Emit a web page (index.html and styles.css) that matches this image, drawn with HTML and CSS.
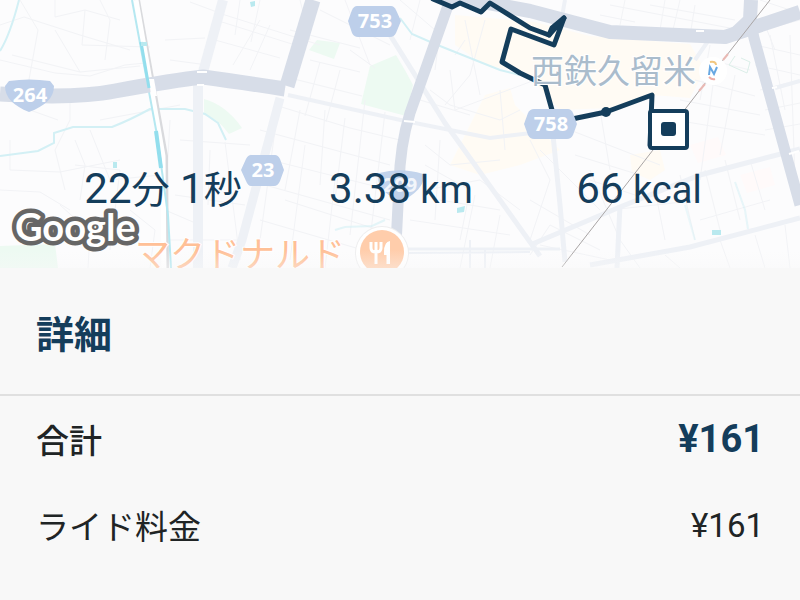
FILE: index.html
```html
<!DOCTYPE html>
<html lang="ja">
<head>
<meta charset="utf-8">
<meta name="viewport" content="width=device-width, initial-scale=1">
<title>ライド詳細</title>
<link rel="stylesheet" href="styles.css">
</head>
<body>
<main class="ride">
  <section class="summary">
    <svg class="map" viewBox="0 0 800 268" preserveAspectRatio="xMidYMid slice" role="img" aria-label="ライドの経路">
      <defs>
        <linearGradient id="fade" x1="0" y1="0" x2="0" y2="1">
          <stop offset="0" stop-color="#f9f9f9" stop-opacity="0"/>
          <stop offset="1" stop-color="#f8f8f8" stop-opacity=".4"/>
        </linearGradient>
      </defs>
      <rect width="800" height="268" fill="#fcfcfd"/>

      <!-- built-up areas -->
      <g fill="#fffbf4">
        <path d="M455 15L535 22 590 36 690 44 705 70 690 98 652 95 610 108 560 110 525 72 485 65 455 45Z"/>
        <path d="M485 95L510 88 515 105 560 150 520 165 480 175 450 165 470 125Z"/>
        <path d="M630 155L660 150 665 170 650 180 632 172Z"/>
      </g>
      <path d="M690 145l28-8 8 18-28 8zM740 175l30-8 5 18-28 8z" fill="#fffafa"/>

      <!-- parks -->
      <g fill="#edfaf2">
        <path d="M396 55L406 72 413 85 406 116 361 104 370 66Z"/>
        <path d="M317 40L340 43 334 59 309 50Z"/>
        <path d="M204 99Q226 105 242 128L229 134Q217 117 204 115Z"/>
        <path d="M0 246L55 244 58 268 0 268Z"/>
      </g>

      <!-- local streets -->
      <g class="lane">
        <path d="M0 25L24 17 80 35 130 50M12 55L80 72 140 66M28 85L38 30 20 0M55 0V17L85 10 120 20M0 60L55 73 90 76 125 65 145 63M55 30L80 72M85 10L82 45 150 47M100 0L110 20 105 60M165 40L205 38M190 2L225 15 320 45M170 60L200 64M233 65L260 20M250 70L270 25M222 22L295 45M215 40L280 58M240 0L235 35M260 0L251 42"/>
        <path d="M70 103V120L55 150 65 190M30 110L58 120M10 140V170L60 172 120 160M75 140L85 165 80 200M90 130L110 180 160 175M0 190L40 192 70 210M100 120L180 105M75 165L120 170 110 250M170 120L165 210 200 225M180 140L250 145M175 195L245 205M210 150L208 205M225 142L240 260M165 240L240 240M60 205L90 232 88 268M130 210L155 230 150 268"/>
        <path d="M300 0L310 40M320 10L390 45M290 30L360 48M350 50L375 68M345 0L370 65M310 60L360 72M290 78L362 96M275 105L350 128 400 140M320 62L305 116M340 70L326 122M325 110L320 185M345 118L335 200M300 110L285 190M260 130L390 165M250 155L390 190M265 185L390 220M285 200L385 232M260 220L380 255M275 130L260 240M305 145L290 260M335 180L325 268M365 100L350 235M385 112L370 240"/>
        <path d="M400 0L435 30M420 0L410 40M440 30L435 70M455 55L465 40M485 20L470 75 445 105M465 20L480 95M450 70L455 110 535 80M430 90L450 105 500 120 520 110M420 100L470 115M500 90L505 150M425 145L450 165 500 160M425 165L470 190 460 240M440 140L435 220M410 220L510 235M440 200L500 210M475 195L460 268M500 215L490 268M425 190L480 180 520 210"/>
        <path d="M610 5L740 30M600 15L635 22M665 0L660 30M680 0L672 34M695 5L690 36M625 0L620 25M650 5L735 20M760 0L790 10M750 20L745 35 800 20M765 25L775 50M710 45L700 100M710 60L750 70M695 80L755 96M680 100L760 115M675 120L765 135M735 75L720 155M715 70L700 180M755 45L800 55M755 65L800 75M770 35L785 110M790 35L795 180M760 90L800 80M765 110L800 103M765 130L800 124"/>
        <path d="M570 130L660 165M575 155L640 175M600 110L610 170M590 170L620 240M530 140L550 180 530 240M540 150L600 210M530 200L590 235M540 245L610 260M590 180L650 200M610 210L700 200M655 190L665 240M680 175L695 240M705 170L720 230M725 160L740 220M750 160L765 210M700 220L770 200M620 240L640 268M665 255L680 268M720 240L730 268M755 235L765 268M785 225L790 268M530 255L550 225 600 250"/>
      </g>
      <path d="M735 56L729 65 747 73 750 62 741 58" class="lane green-line"/>

      <!-- water -->
      <g class="stream">
        <path d="M19 0Q10 35 0 51"/>
        <path d="M0 156L38 151 54 143V133L73 127 112 127Q130 120 150 109L185 109 205 114 218 123 226 140"/>
        <path d="M400 18L412 34 435 44 500 70 520 75"/>
        <path d="M335 230L345 227 372 226 385 220" opacity=".6"/>
        <path d="M735 182L745 210 748 229" opacity=".5"/>
        <path d="M685 205L695 240" opacity=".4"/>
      </g>

      <!-- secondary roads -->
      <g class="street">
        <path d="M223 0L203 72" stroke-width="10"/>
        <path d="M198 83V268" stroke-width="10"/>
        <path d="M280 98L242 240 232 268" stroke-width="9"/>
        <path d="M288 95L405 121 490 138 540 132" stroke-width="4"/>
        <path d="M390 35L445 123 540 256" stroke-width="5"/>
        <path d="M553 135L560 205 565 262" stroke-width="5"/>
        <path d="M530 245L620 207 700 175 800 149" stroke-width="5"/>
        <path d="M620 205L617 268" stroke-width="5"/>
        <path d="M590 265L690 247 800 218" stroke-width="5"/>
        <path d="M402 249H560" stroke-width="3"/>
        <path d="M402 253L530 252M470 240V268M485 250V268" stroke-width="2"/>
        <path d="M708 41L695 60M775 88L800 81M565 0L561 22" stroke-width="4"/>
      </g>

      <!-- railways -->
      <g fill="none">
        <path d="M137 0L165 156 166 268" stroke="#d9dadd" stroke-width="6"/>
        <path d="M136 0L163 156 164 268" stroke="#fff" stroke-width="5"/>
        <path d="M132 0L157 135 168 215 171 268" stroke="#b5e8f1" stroke-width="2"/>
      </g>

      <!-- main roads -->
      <g class="road">
        <path d="M0 94Q75 99 115 91Q175 80 203 77Q240 82 285 89" stroke-width="15"/>
        <path d="M313 0L287 86" stroke-width="15"/>
        <path d="M450 0L410 113Q400 145 399 185L396 245" stroke-width="11"/>
        <path d="M430 -8L530 11 610 32 725 37 800 12" stroke-width="14"/>
        <path d="M751 0L750 20 733 36" stroke-width="14"/>
        <path d="M750 20L754 38 800 205" stroke-width="11"/>
      </g>
      <path d="M149 79h5l3 17h-6z" fill="#fff"/>
      <g fill="none" stroke="#93deed">
        <path d="M141 42L149 88" stroke-width="3"/>
        <path d="M156 131L161 168" stroke-width="4"/>
      </g>
      <g fill="none" stroke="#fff" stroke-width="2"><path d="M197 72H207M197 85H204M404 121L415 122M696 31H704M772 88L777 87M789 154L799 151"/></g>
      <g fill="#b9e9ef"><path d="M250 2l5-1v5l-4 1zM457 208l8-2-1 6-7 1zM712 230h9v5h-9zM113 162h4v6h-4zM141 42h6v4h-6z"/></g>

      <path d="M770 0L723 60 686 108 653 150 562 267" fill="none" stroke="#a9a5a5" stroke-width="1"/>
      <path d="M728 54L723 60M705 84L699 91" fill="none" stroke="#e9b9b4" stroke-width="2"/>

      <!-- route -->
      <g class="route">
        <path d="M433 -1L452 7 460 3 481 12 490 3 530 28 549 35 564 18 554 45 511 29 502 62 520 73 545 85 552 110"/>
        <path d="M549 35L552 28 564 18"/>
        <path d="M572 119L606 112 652 95 650 145"/>
      </g>
      <circle cx="606" cy="112" r="5" fill="#143d5b"/>

      <!-- station -->
      <circle cx="713" cy="71" r="14" fill="#fff"/>
      <text class="place station" x="531" y="83">西鉄久留米</text>
      <path d="M709 75L710 67 714 74 717 67" fill="none" stroke="#68a8e2" stroke-width="2"/>
      <path d="M710 62Q716 61 716 65" fill="none" stroke="#f2c77f" stroke-width="2"/>
      <path d="M709 77Q712 80 715 79" fill="none" stroke="#ecada6" stroke-width="2"/>

      <!-- road numbers -->
      <g class="shield">
        <path d="M9 81Q29 78 50 81L54 86C54 98 45 106 29 112C14 106 5 98 5 86Z"/>
        <path d="M357 6H391Q394 6 396 10L401 21 396 33Q394 37 390 37H358Q354 37 352 33L348 21 352 10Q354 6 357 6Z"/>
        <path d="M534 109H568Q571 109 573 113L577 124 573 135Q571 139 567 139H534Q530 139 528 135L524 124 528 113Q530 109 534 109Z"/>
        <path d="M251 155H275Q278 155 280 159L284 170 280 181Q278 186 274 186H251Q248 186 246 181L241 170 246 159Q248 155 251 155Z"/>
        <path d="M379 173Q401 167 423 174C426 185 414 195 402 201C386 196 375 186 379 173Z" opacity=".9"/>
      </g>
      <g class="shield-number">
        <text x="30" y="102">264</text>
        <text x="375" y="28">753</text>
        <text x="551" y="131">758</text>
        <text x="263" y="177">23</text>
        <text x="400" y="192" opacity=".8">209</text>
      </g>

      <rect x="650" y="111" width="37" height="37" rx="2" fill="#fff" stroke="#143d5b" stroke-width="4"/>
      <rect x="661" y="122" width="15" height="14" rx="3" fill="#143d5b"/>

      <!-- restaurant -->
      <text class="place food" x="135" y="267">マクドナルド</text>
      <circle cx="382" cy="253" r="27" fill="#eeeeef"/>
      <circle cx="382" cy="253" r="26" fill="#fff"/>
      <circle cx="382" cy="252" r="22" fill="#ffcdab"/>
      <path d="M371 242V248Q371 252 376 252Q381 252 381 248V242M376 242V264M388 264V243" fill="none" stroke="#fff" stroke-width="3"/>
      <path d="M390 264V241Q384 242 384 252V255H388V264Z" fill="#fff"/>
      <rect y="250" width="800" height="18" fill="url(#fade)"/>
      <text class="attribution" x="15" y="241">Google</text>
    </svg>
    <ul class="stats">
      <li>22<span class="unit">分</span> 1<span class="unit">秒</span></li>
      <li>3.38<span class="unit"> km</span></li>
      <li>66<span class="unit"> kcal</span></li>
    </ul>
  </section>
  <section class="details">
    <h1 class="details-title">詳細</h1>
    <dl class="charges">
      <div class="charge total"><dt>合計</dt><dd>¥161</dd></div>
      <div class="charge"><dt>ライド料金</dt><dd>¥161</dd></div>
    </dl>
  </section>
</main>
</body>
</html>
```
FILE: styles.css
```css
* {
  box-sizing: border-box;
}

body {
  margin: 0;
  background: #f8f8f8;
  color: #202425;
  font-family: Roboto, "Noto Sans CJK JP", sans-serif;
}

.summary {
  display: grid;
  overflow: hidden;
}

.map,
.stats {
  grid-area: 1 / 1;
}

.map {
  display: block;
  width: 100%;
  min-height: 268px;
}

.lane {
  fill: none;
  stroke: #f2f3f6;
  stroke-width: 1;
}

.green-line {
  stroke: #dcefe9;
}

.stream {
  fill: none;
  stroke: #d3f0f5;
  stroke-width: 2;
}

.street {
  fill: none;
  stroke: #eef1f6;
}

.road {
  fill: none;
  stroke: #d7dde8;
  stroke-linejoin: round;
}

.route {
  fill: none;
  stroke: #143d5b;
  stroke-width: 5;
  stroke-linejoin: round;
  stroke-linecap: round;
}

.place {
  font-family: "Noto Sans CJK JP", sans-serif;
  paint-order: stroke;
  stroke: #fff;
  stroke-width: 2px;
}

.station {
  fill: #aabccc;
  font-size: 33px;
}

.food {
  fill: #ffc097;
  font-size: 35px;
}

.shield {
  fill: #bdcfea;
}

.shield-number {
  fill: #fff;
  font-family: "Noto Sans", sans-serif;
  font-size: 20px;
  font-weight: 700;
  text-anchor: middle;
}

.attribution {
  fill: #fff;
  stroke: #666;
  stroke-width: 9px;
  stroke-linejoin: round;
  paint-order: stroke;
  font-family: Lato, sans-serif;
  font-size: 38px;
  font-weight: 700;
}

.stats {
  display: grid;
  grid-template-columns: repeat(3, 1fr);
  align-self: end;
  margin: 0;
  padding: 0 42px 50px 44px;
  list-style: none;
  color: #143d5b;
  font-size: 42px;
  line-height: 56px;
  text-align: center;
  white-space: nowrap;
}

.unit {
  font-size: 38px;
}

.details-title {
  margin: 0;
  padding: 38px 36px 30px;
  border-bottom: 2px solid #e0e0e0;
  color: #143d5b;
  font-size: 38px;
  font-weight: 700;
  line-height: 58px;
}

.charges {
  margin: 0;
  padding: 0 36px;
}

.charge {
  display: flex;
  align-items: center;
  justify-content: space-between;
  height: 86px;
  font-size: 33px;
}

.charge dd {
  margin: 0;
}

.total dt {
  font-weight: 500;
}

.total dd {
  color: #143d5b;
  font-size: 38px;
  font-weight: 700;
}
```
